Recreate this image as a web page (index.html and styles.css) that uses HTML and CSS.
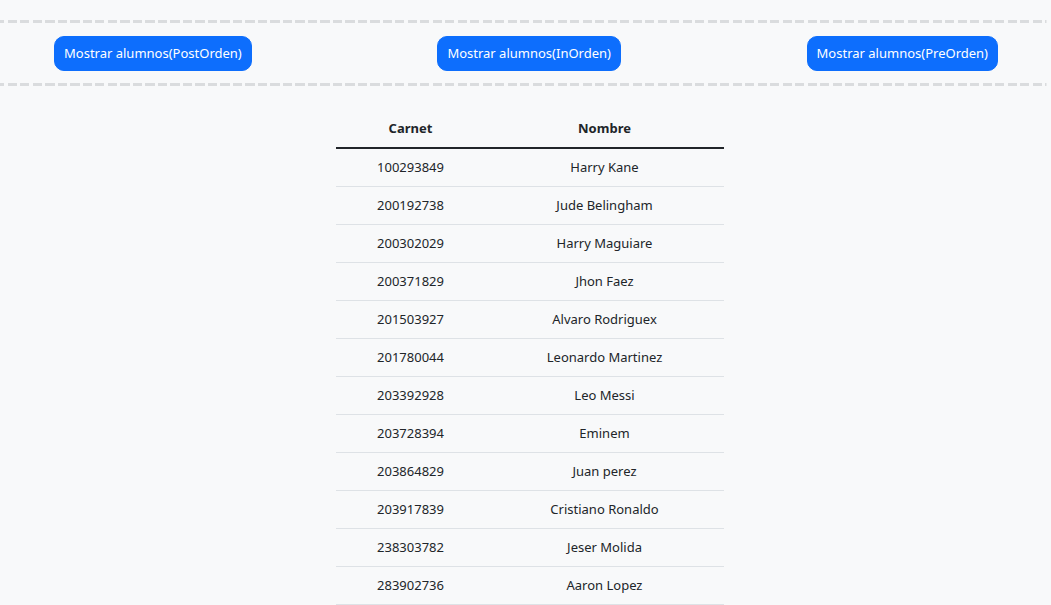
FILE: index.html
```html
<!DOCTYPE html>
<html lang="es">
<head>
<meta charset="utf-8">
<title>Alumnos</title>
<link rel="stylesheet" href="styles.css">
</head>
<body>
<div class="toolbar">
  <button class="btn">Mostrar alumnos(PostOrden)</button>
  <button class="btn">Mostrar alumnos(InOrden)</button>
  <button class="btn">Mostrar alumnos(PreOrden)</button>
</div>
<table class="tabla">
  <thead>
    <tr><th class="c1">Carnet</th><th class="c2">Nombre</th></tr>
  </thead>
  <tbody>
    <tr><td>100293849</td><td>Harry Kane</td></tr>
    <tr><td>200192738</td><td>Jude Belingham</td></tr>
    <tr><td>200302029</td><td>Harry Maguiare</td></tr>
    <tr><td>200371829</td><td>Jhon Faez</td></tr>
    <tr><td>201503927</td><td>Alvaro Rodriguex</td></tr>
    <tr><td>201780044</td><td>Leonardo Martinez</td></tr>
    <tr><td>203392928</td><td>Leo Messi</td></tr>
    <tr><td>203728394</td><td>Eminem</td></tr>
    <tr><td>203864829</td><td>Juan perez</td></tr>
    <tr><td>203917839</td><td>Cristiano Ronaldo</td></tr>
    <tr><td>238303782</td><td>Jeser Molida</td></tr>
    <tr><td>283902736</td><td>Aaron Lopez</td></tr>
  </tbody>
</table>
</body>
</html>
```
FILE: styles.css
```css
html, body {
  margin: 0;
  padding: 0;
}
body {
  background: #f8f9fa;
  color: #212529;
  font-family: "Noto Sans", "Open Sans", sans-serif;
  font-size: 13px;
  line-height: 1.5;
}
.toolbar {
  margin-top: 20px;
  padding: 16px 53px 15px 54px;
  display: flex;
  justify-content: space-between;
  align-items: center;
  background-image:
    repeating-linear-gradient(90deg, #dadcde 0 9px, transparent 9px 12.5px),
    repeating-linear-gradient(90deg, #dadcde 0 9px, transparent 9px 12.5px);
  background-size: 100% 3px, 100% 3px;
  background-position: -4.5px top, -4.5px bottom;
  background-repeat: no-repeat;
}
.btn {
  font-family: inherit;
  font-size: 13px;
  line-height: 21px;
  height: 35px;
  padding: 6px 9px;
  border: 1px solid #0d6efd;
  background: #0d6efd;
  color: #fff;
  border-radius: 10px;
}
.tabla {
  margin: 24px 0 0 336px;
  width: 388px;
  border-collapse: collapse;
}
.tabla th, .tabla td {
  text-align: center;
  padding: 8px;
  line-height: 21px;
}
.tabla th {
  font-weight: 700;
  border-bottom: 2px solid #212529;
}
.tabla td {
  border-bottom: 1px solid #dee2e6;
}
.c1 { width: 149px; box-sizing: border-box; }
.c2 { width: 239px; box-sizing: border-box; }
```
